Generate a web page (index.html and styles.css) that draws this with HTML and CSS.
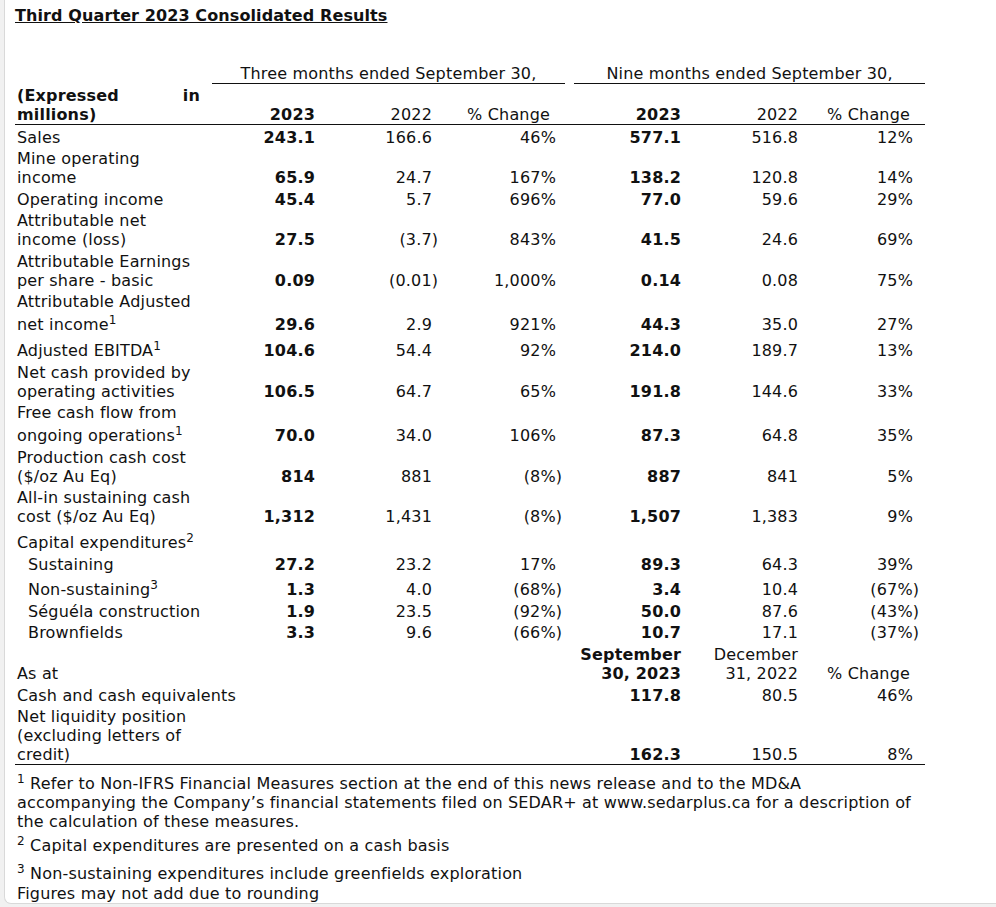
FILE: index.html
```html
<!DOCTYPE html>
<html lang="en">
<head>
<meta charset="utf-8">
<title>Third Quarter 2023 Consolidated Results</title>
<link rel="stylesheet" href="styles.css">
</head>
<body>
<div class="card">
  <p class="title">Third Quarter 2023 Consolidated Results</p>
  <table class="fin">
    <colgroup>
      <col class="c-label"><col class="c-a"><col class="c-b"><col class="c-c"><col class="c-sp"><col class="c-d"><col class="c-e"><col class="c-f">
    </colgroup>
    <tr class="periods">
      <td></td>
      <td colspan="3" class="period">Three months ended September 30,</td>
      <td></td>
      <td colspan="3" class="period">Nine months ended September 30,</td>
    </tr>
    <tr class="hdr">
      <td class="lbl exp">(Expressed in millions)</td>
      <td class="num b">2023</td>
      <td class="num">2022</td>
      <td class="pct chg">% Change</td>
      <td></td>
      <td class="num b">2023</td>
      <td class="num">2022</td>
      <td class="pct2 chg">% Change</td>
    </tr>
    <tr class="first">
      <td class="lbl">Sales</td>
      <td class="num b">243.1</td><td class="num">166.6</td><td class="pct">46%</td><td></td>
      <td class="num b">577.1</td><td class="num">516.8</td><td class="pct2">12%</td>
    </tr>
    <tr>
      <td class="lbl">Mine operating income</td>
      <td class="num b">65.9</td><td class="num">24.7</td><td class="pct">167%</td><td></td>
      <td class="num b">138.2</td><td class="num">120.8</td><td class="pct2">14%</td>
    </tr>
    <tr>
      <td class="lbl">Operating income</td>
      <td class="num b">45.4</td><td class="num">5.7</td><td class="pct">696%</td><td></td>
      <td class="num b">77.0</td><td class="num">59.6</td><td class="pct2">29%</td>
    </tr>
    <tr>
      <td class="lbl">Attributable net income (loss)</td>
      <td class="num b">27.5</td><td class="num">(3.7<span class="rp">)</span></td><td class="pct">843%</td><td></td>
      <td class="num b">41.5</td><td class="num">24.6</td><td class="pct2">69%</td>
    </tr>
    <tr>
      <td class="lbl">Attributable Earnings per share - basic</td>
      <td class="num b">0.09</td><td class="num">(0.01<span class="rp">)</span></td><td class="pct">1,000%</td><td></td>
      <td class="num b">0.14</td><td class="num">0.08</td><td class="pct2">75%</td>
    </tr>
    <tr>
      <td class="lbl">Attributable Adjusted net income<sup>1</sup></td>
      <td class="num b">29.6</td><td class="num">2.9</td><td class="pct">921%</td><td></td>
      <td class="num b">44.3</td><td class="num">35.0</td><td class="pct2">27%</td>
    </tr>
    <tr>
      <td class="lbl">Adjusted EBITDA<sup>1</sup></td>
      <td class="num b">104.6</td><td class="num">54.4</td><td class="pct">92%</td><td></td>
      <td class="num b">214.0</td><td class="num">189.7</td><td class="pct2">13%</td>
    </tr>
    <tr>
      <td class="lbl">Net cash provided by operating activities</td>
      <td class="num b">106.5</td><td class="num">64.7</td><td class="pct">65%</td><td></td>
      <td class="num b">191.8</td><td class="num">144.6</td><td class="pct2">33%</td>
    </tr>
    <tr>
      <td class="lbl">Free cash flow from ongoing operations<sup>1</sup></td>
      <td class="num b">70.0</td><td class="num">34.0</td><td class="pct">106%</td><td></td>
      <td class="num b">87.3</td><td class="num">64.8</td><td class="pct2">35%</td>
    </tr>
    <tr>
      <td class="lbl">Production cash cost ($/oz Au Eq)</td>
      <td class="num b">814</td><td class="num">881</td><td class="pct">(8%<span class="rp">)</span></td><td></td>
      <td class="num b">887</td><td class="num">841</td><td class="pct2">5%</td>
    </tr>
    <tr>
      <td class="lbl">All-in sustaining cash cost ($/oz Au Eq)</td>
      <td class="num b">1,312</td><td class="num">1,431</td><td class="pct">(8%<span class="rp">)</span></td><td></td>
      <td class="num b">1,507</td><td class="num">1,383</td><td class="pct2">9%</td>
    </tr>
    <tr>
      <td class="lbl">Capital expenditures<sup>2</sup></td>
      <td></td><td></td><td></td><td></td><td></td><td></td><td></td>
    </tr>
    <tr>
      <td class="lbl sub">Sustaining</td>
      <td class="num b">27.2</td><td class="num">23.2</td><td class="pct">17%</td><td></td>
      <td class="num b">89.3</td><td class="num">64.3</td><td class="pct2">39%</td>
    </tr>
    <tr>
      <td class="lbl sub">Non-sustaining<sup>3</sup></td>
      <td class="num b">1.3</td><td class="num">4.0</td><td class="pct">(68%<span class="rp">)</span></td><td></td>
      <td class="num b">3.4</td><td class="num">10.4</td><td class="pct2">(67%<span class="rp">)</span></td>
    </tr>
    <tr>
      <td class="lbl sub">Séguéla construction</td>
      <td class="num b">1.9</td><td class="num">23.5</td><td class="pct">(92%<span class="rp">)</span></td><td></td>
      <td class="num b">50.0</td><td class="num">87.6</td><td class="pct2">(43%<span class="rp">)</span></td>
    </tr>
    <tr>
      <td class="lbl sub">Brownfields</td>
      <td class="num b">3.3</td><td class="num">9.6</td><td class="pct">(66%<span class="rp">)</span></td><td></td>
      <td class="num b">10.7</td><td class="num">17.1</td><td class="pct2">(37%<span class="rp">)</span></td>
    </tr>
    <tr>
      <td class="lbl">As at</td>
      <td></td><td></td><td></td><td></td>
      <td class="num b">September 30, 2023</td><td class="num">December 31, 2022</td><td class="pct2 chg">% Change</td>
    </tr>
    <tr>
      <td class="lbl nowrap">Cash and cash equivalents</td>
      <td></td><td></td><td></td><td></td>
      <td class="num b">117.8</td><td class="num">80.5</td><td class="pct2">46%</td>
    </tr>
    <tr class="last">
      <td class="lbl">Net liquidity position (excluding letters of credit)</td>
      <td></td><td></td><td></td><td></td>
      <td class="num b">162.3</td><td class="num">150.5</td><td class="pct2">8%</td>
    </tr>
  </table>
  <div class="notes">
    <p class="note"><sup>1</sup> Refer to Non-IFRS Financial Measures section at the end of this news release and to the MD&amp;A<br>accompanying the Company’s financial statements filed on SEDAR+ at www.sedarplus.ca for a description of<br>the calculation of these measures.</p>
    <p class="note note-gap"><sup>2</sup> Capital expenditures are presented on a cash basis</p>
    <p class="note"><sup>3</sup> Non-sustaining expenditures include greenfields exploration</p>
    <p class="note">Figures may not add due to rounding</p>
  </div>
</div>
</body>
</html>
```

FILE: styles.css
```css
html, body {
  margin: 0;
  padding: 0;
  overflow: hidden;
}
body {
  background: #f1f1f1;
  font-family: "DejaVu Sans", Verdana, sans-serif;
  font-size: 16px;
  line-height: 19px;
  letter-spacing: 0.17px;
  color: #111;
  height: 907px;
}
.card {
  box-sizing: border-box;
  margin-left: 4px;
  width: 1020px;
  height: 904px;
  background: #fff;
  border-left: 1px solid #d9d9d9;
  border-bottom: 1px solid #d9d9d9;
  border-bottom-left-radius: 7px;
  padding: 6px 0 0 10px;
}
.title {
  margin: 0;
  font-weight: bold;
  text-decoration: underline;
  letter-spacing: 0.1px;
}
.fin {
  margin-top: 39px;
  width: 910px;
  table-layout: fixed;
  border-collapse: collapse;
}
.c-label { width: 197px; }
.c-a { width: 108px; }
.c-b { width: 117px; }
.c-c { width: 128px; }
.c-sp { width: 9px; }
.c-d { width: 112px; }
.c-e { width: 117px; }
.c-f { width: 122px; }
.fin td {
  padding: 1px 0 1.6px;
  vertical-align: bottom;
}
.fin .periods td {
  padding: 0;
}
.fin .period {
  text-align: center;
  border-bottom: 1px solid #111;
}
.fin .hdr td {
  padding: 2px 0 0;
  border-bottom: 1px solid #111;
}
.fin .first td {
  padding-top: 3px;
}
.fin .last td {
  padding-bottom: 0;
  border-bottom: 1px solid #111;
}
.fin td.lbl {
  padding-left: 2px;
  padding-right: 12px;
}
.fin td.sub {
  padding-left: 13px;
  white-space: nowrap;
}
.fin td.exp {
  font-weight: bold;
  text-align: justify;
}
.fin td.nowrap {
  white-space: nowrap;
}
.fin td.num {
  text-align: right;
  padding-right: 5px;
}
.fin td.pct {
  text-align: right;
  padding-right: 9px;
}
.fin td.pct2 {
  text-align: right;
  padding-right: 12px;
}
.fin td.chg {
  padding-right: 15px;
}
.b {
  font-weight: bold;
}
.rp {
  margin-right: -0.39em;
}
sup {
  font-size: 12px;
  line-height: 19.7px;
  vertical-align: 6px;
}
.notes {
  width: 920px;
  padding-left: 2px;
  padding-top: 5px;
}
.note {
  margin: 0 0 1px;
}
.note-gap {
  margin-bottom: 5px;
}
```
